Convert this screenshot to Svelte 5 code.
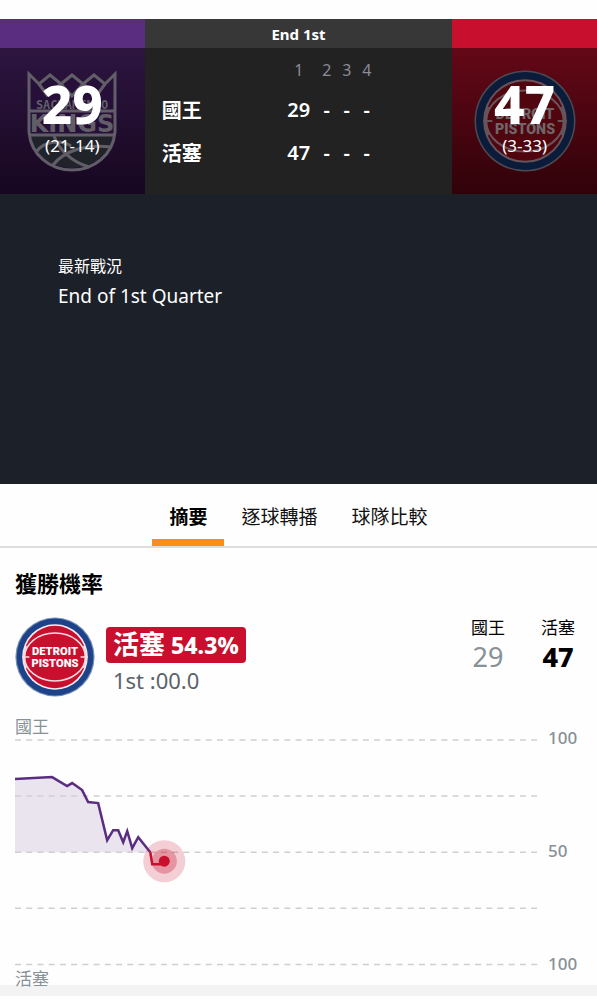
<script lang="ts">
    type Team = { name: string; score: number; record: string; periods: string[] };

    const kings: Team = { name: "國王", score: 29, record: "(21-14)", periods: ["29", "-", "-", "-"] };
    const pistons: Team = { name: "活塞", score: 47, record: "(3-33)", periods: ["47", "-", "-", "-"] };

    const tabs = ["摘要", "逐球轉播", "球隊比較"];
    let active = $state(0);

    const gridLines = [1, 57, 113, 169, 225];
    const homePoints =
        "0,40 37,38 52,47 57,44 67,51 73,63 83,64 92,101 98,91 103,91 108,103 112,92 117,109 123,98 135,113";
</script>

{#snippet pistonsLogo(muted: boolean)}
    <svg class="logo" class:muted viewBox="0 0 100 100" aria-label="Detroit Pistons" role="img">
        <circle cx="50" cy="50" r="49.5" class="silver" />
        <circle cx="50" cy="50" r="48" class="blue" />
        <circle cx="50" cy="50" r="41" class="white" />
        <circle cx="50" cy="50" r="39" class="ball" />
        <g class="seam">
            <ellipse cx="50" cy="50" rx="38" ry="30" />
            <path d="M14 36 C10 45 10 55 14 64 M86 36 C90 45 90 55 86 64" />
            <path d="M9 50 H18 M82 50 H91" />
        </g>
        <text x="50" y="48" text-anchor="middle">DETROIT</text>
        <text x="50" y="63" text-anchor="middle">PISTONS</text>
    </svg>
{/snippet}

{#snippet kingsLogo()}
    <svg class="logo kings" viewBox="0 0 90 102" aria-label="Sacramento Kings" role="img">
        <path
            class="shield"
            d="M2 3 L12 14 L23 4 L34 14 L45 3 L56 14 L67 4 L78 14 L88 3 V62 C86 84 68 100 45 100 C22 100 4 84 2 62 Z"
        />
        <path class="dome" d="M4 65 H86 C84 84 66 98 45 98 C24 98 6 84 4 65 Z" />
        <g class="ray">
            <path d="M2 4 V62 C4 85 23 100 45 100 C67 100 86 85 88 62 V4 L78 14 L67 5 L56 14 L45 5 L34 14 L23 5 L12 14 Z" />
            <path d="M12 14 L20 25 L34 14 L45 26 L56 14 L70 25 L78 14" />
            <path d="M3 41 H87 M3 65 H87" />
            <path d="M27 66 C32 80 45 92 62 97 M9 82 C18 70 34 70 44 76 M26 95 C38 80 60 74 84 77" />
        </g>
        <text class="city" x="45" y="39" text-anchor="middle">SACRAMENTO</text>
        <text class="nick" x="45" y="62" text-anchor="middle">KINGS</text>
    </svg>
{/snippet}

<main>
    <header class="scoreboard">
        <section class="team purple">
            <div class="bar"></div>
            <div class="panel">
                {@render kingsLogo()}
                <div class="total">
                    <strong>{kings.score}</strong>
                    <span>{kings.record}</span>
                </div>
            </div>
        </section>

        <section class="center">
            <div class="bar">End 1st</div>
            <table>
                <thead>
                    <tr>
                        <td></td>
                        {#each [1, 2, 3, 4] as period}
                            <th scope="col">{period}</th>
                        {/each}
                    </tr>
                </thead>
                <tbody>
                    {#each [kings, pistons] as team}
                        <tr>
                            <th scope="row">{team.name}</th>
                            {#each team.periods as points}
                                <td>{points}</td>
                            {/each}
                        </tr>
                    {/each}
                </tbody>
            </table>
        </section>

        <section class="team red">
            <div class="bar"></div>
            <div class="panel">
                {@render pistonsLogo(true)}
                <div class="total">
                    <strong>{pistons.score}</strong>
                    <span>{pistons.record}</span>
                </div>
            </div>
        </section>
    </header>

    <section class="latest">
        <h2>最新戰況</h2>
        <p>End of 1st Quarter</p>
    </section>

    <nav>
        {#each tabs as tab, i}
            <button class:active={active === i} onclick={() => (active = i)}>{tab}</button>
        {/each}
    </nav>

    <section class="probability">
        <h1>獲勝機率</h1>

        <div class="summary">
            {@render pistonsLogo(false)}
            <div class="leader">
                <div class="badge"><span>活塞</span> 54.3%</div>
                <div class="clock">1st :00.0</div>
            </div>
            <dl>
                <div>
                    <dt>{kings.name}</dt>
                    <dd>{kings.score}</dd>
                </div>
                <div class="winning">
                    <dt>{pistons.name}</dt>
                    <dd>{pistons.score}</dd>
                </div>
            </dl>
        </div>

        <div class="side">{kings.name}</div>
        <div class="chart">
            <svg viewBox="0 0 523 226" aria-label="獲勝機率" role="img">
                <polygon class="area" points="0,113 {homePoints}" />
                {#each gridLines as y}
                    <line class="grid" x1="0" x2="523" y1={y} y2={y} />
                {/each}
                <polyline class="home" points={homePoints} />
                <polyline class="away" points="135,113 137,125 149,125" />
                <circle class="halo outer" cx="149" cy="122" r="21" />
                <circle class="halo" cx="149" cy="122" r="12.5" />
                <circle class="dot" cx="149" cy="122" r="5.5" />
            </svg>
            <div class="axis">
                <span>100</span>
                <span>50</span>
                <span>100</span>
            </div>
        </div>
        <div class="side bottom">{pistons.name}</div>
    </section>
    <div class="divider"></div>
</main>

<style>
    :global(body) {
        background: #fefefe;
        font-family: "Noto Sans", "Noto Sans CJK TC", sans-serif;
        color: #000;
    }

    main {
        padding-top: 19px;
    }

    h1,
    h2,
    p,
    dl,
    dd {
        margin: 0;
    }

    .scoreboard {
        display: grid;
        grid-template-columns: 16fr 34fr 16fr;
        color: #fff;
        background: #222;
    }

    .bar {
        height: 29px;
        line-height: 30px;
        font-size: 15px;
        font-weight: 700;
        text-align: center;
        background: #373737;
    }

    .purple .bar {
        background: #5a2d81;
    }

    .red .bar {
        background: #c8102e;
    }

    .panel {
        display: grid;
        place-items: center;
        height: 146px;
        background: linear-gradient(#2d1540, #170720);
    }

    .red .panel {
        background: linear-gradient(#640817, #300209);
    }

    .panel > :global(*) {
        grid-area: 1 / 1;
    }

    .total {
        position: relative;
        display: flex;
        flex-direction: column;
        align-items: center;
        padding-bottom: 10px;
    }

    .total strong {
        font-size: 53px;
        font-weight: 800;
        line-height: 60px;
    }

    .total span {
        font-size: 17px;
        line-height: 24px;
    }

    .logo {
        width: 80px;
        height: 80px;
    }

    .logo.muted {
        width: 102px;
        height: 102px;
    }

    .logo.kings {
        width: 90px;
        height: 102px;
    }

    .logo text {
        font-family: "Roboto", "Liberation Sans", sans-serif;
        font-size: 14px;
        font-weight: 900;
        fill: #fff;
    }

    .silver {
        fill: #7590b5;
    }

    .blue {
        fill: #1d428a;
    }

    .white {
        fill: #f4f0f2;
    }

    .ball {
        fill: #c8102e;
    }

    .seam {
        fill: none;
        stroke: #f7dce1;
        stroke-width: 2;
    }

    .muted .silver {
        fill: #4b4a52;
    }

    .muted .blue {
        fill: #0b1c3b;
    }

    .muted .white {
        fill: #66545a;
    }

    .muted .ball {
        fill: #50050f;
    }

    .muted .seam {
        stroke: #69545a;
    }

    .logo.muted text {
        fill: #706669;
    }

    .shield {
        fill: #26103a;
    }

    .dome {
        fill: #20242a;
    }

    .ray {
        fill: none;
        stroke: #625e67;
        stroke-width: 3;
    }

    .logo .city {
        font-family: "DejaVu Sans Mono", monospace;
        font-size: 12px;
        font-weight: 700;
        fill: #625e67;
    }

    .logo .nick {
        font-family: "DejaVu Sans", sans-serif;
        font-size: 24px;
        font-weight: 700;
        fill: #625e67;
    }

    table {
        margin: 10px 0 0 17px;
        border-collapse: collapse;
    }

    td,
    th {
        padding: 0;
        width: 20px;
        height: 43px;
        font-size: 20px;
        font-weight: 600;
        text-align: center;
    }

    thead th,
    thead td {
        height: 30px;
        font-size: 16px;
        font-weight: 400;
        line-height: 24px;
        vertical-align: top;
        color: #8b8b99;
    }

    tr > :first-child {
        width: 119px;
        font-weight: 700;
        text-align: left;
    }

    tr > :nth-child(2) {
        width: 36px;
    }

    .latest {
        box-sizing: border-box;
        min-height: 290px;
        padding: 60px 58px;
        color: #fff;
        background: #1c2129;
    }

    .latest h2 {
        font-size: 16px;
        font-weight: 400;
        line-height: 24px;
    }

    .latest p {
        font-size: 19px;
        line-height: 36px;
    }

    nav {
        display: flex;
        justify-content: center;
        height: 62px;
        border-bottom: 2px solid #ddd;
    }

    nav button {
        padding: 2px 17px 0;
        border: 0;
        border-bottom: 7px solid transparent;
        border-top: 7px solid transparent;
        background: none;
        font: inherit;
        font-size: 19px;
        color: #111;
    }

    nav button.active {
        border-bottom-color: #ff8c14;
        font-weight: 700;
        color: #000;
    }

    .probability {
        padding: 17px 15px 0;
    }

    h1 {
        font-size: 22px;
        line-height: 36px;
    }

    .summary {
        display: flex;
        align-items: flex-start;
        height: 80px;
        margin-top: 16px;
    }

    .leader {
        margin: 10px 0 0 11px;
    }

    .badge {
        padding: 0 7px;
        border-radius: 4px;
        font-size: 23px;
        font-weight: 800;
        line-height: 35px;
        color: #fff;
        background: #c8102e;
    }

    .badge span {
        font-size: 26px;
        font-weight: 700;
    }

    .clock {
        padding-left: 7px;
        font-size: 22px;
        line-height: 34px;
        color: #5b636a;
    }

    dl {
        display: flex;
        gap: 36px;
        margin: -3px 7px 0 auto;
        text-align: center;
    }

    dt {
        font-size: 17px;
        line-height: 28px;
    }

    dd {
        font-size: 27px;
        line-height: 30px;
        color: #879196;
    }

    .winning dd {
        font-weight: 800;
        color: #000;
    }

    .side {
        margin-top: 18px;
        font-size: 17px;
        line-height: 24px;
        color: #879196;
    }

    .side.bottom {
        margin-top: 2px;
        height: 18px;
    }

    .chart {
        display: grid;
        grid-template-columns: 1fr 43px;
    }

    .chart svg {
        display: block;
        width: 100%;
        overflow: visible;
    }

    .grid {
        stroke: #cfcfcf;
        stroke-width: 1.5;
        stroke-dasharray: 6 5.2;
    }

    .area {
        fill: #5a2d81;
        fill-opacity: 0.12;
    }

    .home,
    .away {
        fill: none;
        stroke: #5a2d81;
        stroke-width: 2.5;
    }

    .away {
        stroke: #c8102e;
    }

    .halo {
        fill: #c8102e;
        fill-opacity: 0.3;
    }

    .outer {
        fill-opacity: 0.2;
    }

    .dot {
        fill: #c8102e;
    }

    .axis {
        display: flex;
        flex-direction: column;
        justify-content: space-between;
        margin: -13px 0 -11px 9px;
        font-size: 17px;
        font-weight: 500;
        line-height: 24px;
        color: #879196;
    }

    .divider {
        height: 11px;
        background: #f3f3f3;
    }
</style>
